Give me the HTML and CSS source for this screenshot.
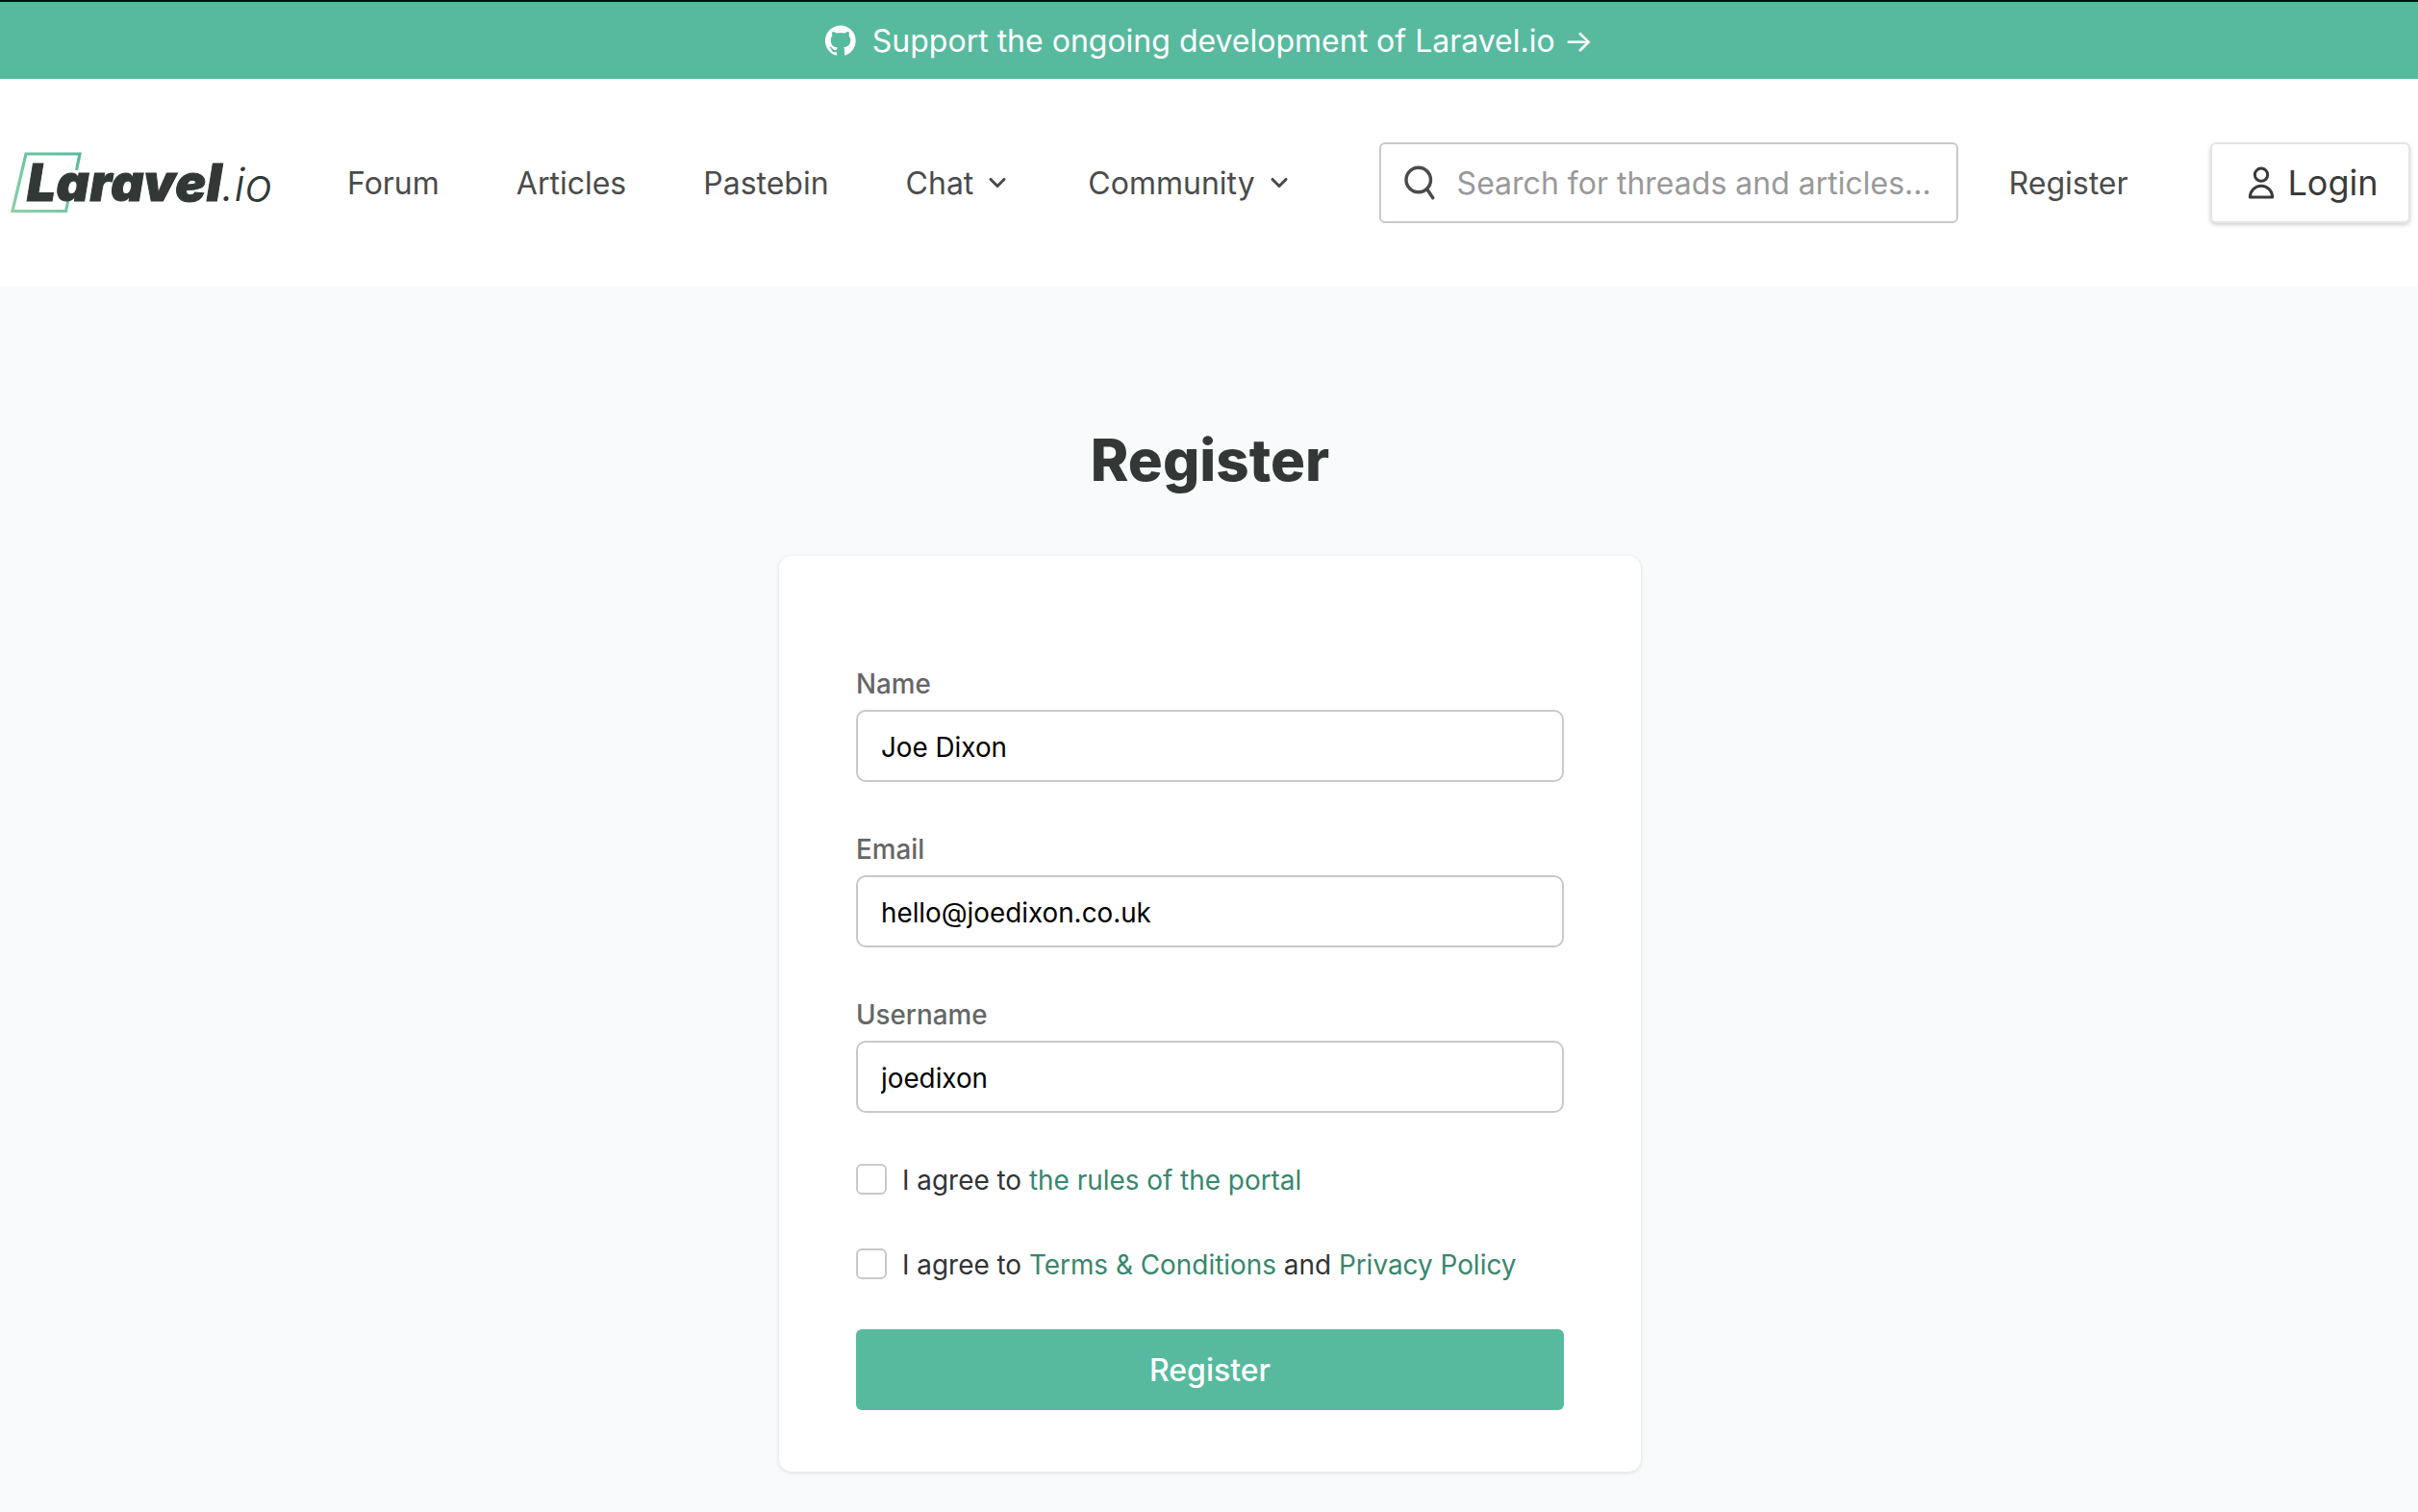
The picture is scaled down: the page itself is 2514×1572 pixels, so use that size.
FILE: index.html
```html
<!DOCTYPE html>
<html lang="en">
<head>
<meta charset="UTF-8" />
<meta name="viewport" content="width=device-width, initial-scale=1" />
<title>Register | Laravel.io</title>
<link rel="stylesheet" href="styles.css">
</head>
<body>
<a class="banner" href="#">
  <svg class="banner-icon" viewBox="0 0 24 24" fill="currentColor"><path d="M12 .3a12 12 0 0 0-3.8 23.4c.6.1.8-.3.8-.6v-2c-3.3.7-4-1.6-4-1.6-.6-1.4-1.4-1.8-1.4-1.8-1-.7.1-.7.1-.7 1.2.1 1.8 1.2 1.8 1.2 1 1.8 2.8 1.3 3.5 1 .1-.8.4-1.3.8-1.6-2.7-.3-5.5-1.3-5.5-6 0-1.3.5-2.4 1.3-3.2-.2-.4-.6-1.6.1-3.2 0 0 1-.3 3.3 1.2a11.5 11.5 0 0 1 6 0c2.3-1.5 3.3-1.2 3.3-1.2.7 1.6.2 2.8.1 3.2.8.8 1.3 1.9 1.3 3.2 0 4.6-2.8 5.6-5.5 5.9.4.4.8 1.1.8 2.2v3.3c0 .3.2.7.8.6A12 12 0 0 0 12 .3z"/></svg>
  <span>Support the ongoing development of Laravel.io →</span>
</a>

<header class="topbar">
  <a class="logo" href="#">
    <svg class="logo-frame" viewBox="0 0 75 64" fill="none">
      <defs>
        <linearGradient id="frameGrad" x1="0" y1="1" x2="1" y2="0">
          <stop offset="0" stop-color="#8ad2a4"/>
          <stop offset="1" stop-color="#57ba9e"/>
        </linearGradient>
      </defs>
      <path d="M69.5 19L73 2H17L3 61.500H58.500l2.500-12" stroke="url(#frameGrad)" stroke-width="3.200"/>
    </svg>
    <span class="logo-word">Laravel</span><span class="logo-io">.io</span>
  </a>
  <nav class="nav">
    <a href="#">Forum</a>
    <a href="#">Articles</a>
    <a href="#">Pastebin</a>
    <a href="#">Chat<svg class="chev" viewBox="0 0 20 20" fill="none" stroke="currentColor" stroke-width="2.200"><path d="M5 7.500l5 5 5-5" stroke-linecap="round" stroke-linejoin="round"/></svg></a>
    <a href="#">Community<svg class="chev" viewBox="0 0 20 20" fill="none" stroke="currentColor" stroke-width="2.200"><path d="M5 7.500l5 5 5-5" stroke-linecap="round" stroke-linejoin="round"/></svg></a>
  </nav>
  <div class="search">
    <svg class="search-icon" viewBox="0 0 24 24" fill="none" stroke="currentColor" stroke-width="2.300" stroke-linecap="round"><circle cx="10.500" cy="10" r="8.500"/><path d="M16.500 16.500l4 6"/></svg>
    <span class="search-text">Search for threads and articles...</span>
  </div>
  <a class="reg-link" href="#">Register</a>
  <a class="login" href="#">
    <svg class="user-icon" viewBox="0 0 24 24" fill="none" stroke="currentColor" stroke-width="1.800" stroke-linecap="round" stroke-linejoin="round"><path d="M16 7a4 4 0 1 1-8 0 4 4 0 0 1 8 0zM12 14a7 7 0 0 0-7 7h14a7 7 0 0 0-7-7z"/></svg>
    Login
  </a>
</header>

<main class="page">
  <h1 class="title">Register</h1>
  <form class="card">
    <div class="field">
      <label for="name">Name</label>
      <input id="name" type="text" value="Joe Dixon" />
    </div>
    <div class="field">
      <label for="email">Email</label>
      <input id="email" type="text" value="hello@joedixon.co.uk" />
    </div>
    <div class="field">
      <label for="username">Username</label>
      <input id="username" type="text" value="joedixon" />
    </div>
    <div class="check">
      <span class="box"></span>
      <span class="check-text">I agree to <a href="#">the rules of the portal</a></span>
    </div>
    <div class="check">
      <span class="box"></span>
      <span class="check-text">I agree to <a href="#">Terms &amp; Conditions</a> and <a href="#">Privacy Policy</a></span>
    </div>
    <button class="submit" type="button">Register</button>
  </form>
</main>
</body>
</html>
```

FILE: styles.css
```css
* {
  box-sizing: border-box;
}
html, body {
  height: 100%;
}
body {
  margin: 0;
  font-family: Inter, "Liberation Sans", sans-serif;
  background: #f9fafb;
  color: #333;
  overflow: hidden;
}
a {
  text-decoration: none;
  color: inherit;
}

.banner {
  display: flex;
  align-items: center;
  justify-content: center;
  gap: 17px;
  height: 82px;
  border-top: 2px solid #0b0f0e;
  background: #57ba9e;
  color: #fff;
  font-size: 32px;
}
.banner-icon {
  width: 32px;
  height: 32px;
}

.topbar {
  display: flex;
  align-items: center;
  height: 216px;
  background: #fff;
  padding-left: 10px;
}
.logo {
  position: relative;
  display: flex;
  align-items: baseline;
  width: 351px;
  padding-left: 18px;
  color: #313836;
}
.logo-frame {
  position: absolute;
  left: 0;
  top: 0;
  width: 75px;
  height: 64px;
}
.logo-word {
  position: relative;
  font-size: 53px;
  font-weight: 900;
  font-style: italic;
  letter-spacing: 0.600px;
  -webkit-text-stroke: 1px #313836;
}
.logo-io {
  font-size: 48px;
  font-weight: 300;
  font-style: italic;
  margin-left: -1px;
}

.nav {
  display: flex;
  align-items: center;
  gap: 80px;
  font-size: 32px;
  color: #4b4b4b;
}
.nav a {
  display: flex;
  align-items: center;
  gap: 11px;
}
.chev {
  width: 28px;
  height: 28px;
}

.search {
  display: flex;
  align-items: center;
  flex: none;
  width: 602px;
  height: 84px;
  margin-left: 90px;
  padding-left: 23px;
  gap: 20px;
  background: #fff;
  border: 2px solid #c9c9c9;
  border-radius: 6px;
}
.search-icon {
  width: 36px;
  height: 36px;
  color: #4b4b4b;
}
.search-text {
  font-size: 32px;
  color: #999;
  white-space: nowrap;
}
.reg-link {
  margin-left: 53px;
  font-size: 32px;
  color: #4b4b4b;
}
.login {
  display: flex;
  align-items: center;
  flex: none;
  gap: 8px;
  width: 208px;
  height: 84px;
  margin-left: 85px;
  padding-left: 31px;
  background: #fff;
  border: 2px solid #e5e5e5;
  border-radius: 6px;
  box-shadow: 0 2px 4px rgba(0, 0, 0, 0.18);
  font-size: 36px;
  color: #3a3a3a;
}
.user-icon {
  width: 40px;
  height: 40px;
}

.page {
  display: flex;
  flex-direction: column;
  align-items: center;
  padding-left: 2px;
}
.title {
  margin: 150px 0 0;
  font-size: 60px;
  line-height: 60px;
  font-weight: 800;
  color: #333836;
}
.card {
  width: 896px;
  height: 952px;
  margin-top: 70px;
  padding: 116px 80px 0;
  background: #fff;
  border-radius: 13px;
  box-shadow: 0 1px 4px rgba(0, 0, 0, 0.13);
}
.field + .field {
  margin-top: 53px;
}
.field label {
  display: block;
  margin-bottom: 10px;
  font-size: 27.800px;
  line-height: 34px;
  font-weight: 500;
  color: #666;
}
.field input {
  display: block;
  width: 100%;
  height: 75px;
  padding: 2px 24px 0;
  border: 2px solid #c9c9c9;
  border-radius: 10px;
  background: #fff;
  font: 400 27.800px Inter, "Liberation Sans", sans-serif;
  color: #000;
  outline: none;
}
.check {
  display: flex;
  align-items: center;
  gap: 16px;
  height: 34px;
  margin-top: 54px;
  font-size: 27.900px;
  color: #333;
}
.field + .check {
  margin-top: 52px;
}
.check a {
  color: #38876d;
}
.check-text {
  padding-top: 2px;
}
.box {
  width: 32px;
  height: 32px;
  border: 2px solid #c9c9c9;
  border-radius: 6px;
  background: #fff;
}
.submit {
  display: block;
  width: 100%;
  height: 84px;
  margin-top: 51px;
  border: none;
  border-radius: 6px;
  background: #57ba9e;
  color: #fff;
  font: 500 32px Inter, "Liberation Sans", sans-serif;
}
```
